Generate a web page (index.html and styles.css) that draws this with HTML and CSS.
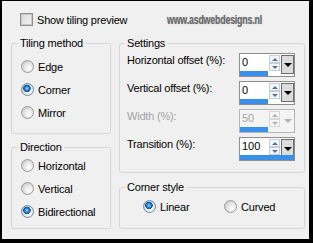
FILE: index.html
```html
<!DOCTYPE html>
<html lang="en">
<head>
    <meta charset="UTF-8">
    <title>Seamless Tiling</title>
    <link rel="stylesheet" href="styles.css">
</head>
<body>
    <div class="dialog">
        <div class="top-row">
            <label class="check"><span class="checkbox"></span>Show tiling preview</label>
            <div class="watermark"><span class="watermark-text">www.asdwebdesigns.nl</span></div>
        </div>

        <div class="groups">
            <div class="col col-left">
                <fieldset class="group group-tiling">
                    <legend>Tiling method</legend>
                    <div class="options">
                        <label class="radio-row"><span class="radio"></span>Edge</label>
                        <label class="radio-row"><span class="radio checked"></span>Corner</label>
                        <label class="radio-row"><span class="radio"></span>Mirror</label>
                    </div>
                </fieldset>
                <fieldset class="group group-direction">
                    <legend>Direction</legend>
                    <div class="options">
                        <label class="radio-row"><span class="radio"></span>Horizontal</label>
                        <label class="radio-row"><span class="radio"></span>Vertical</label>
                        <label class="radio-row"><span class="radio checked"></span>Bidirectional</label>
                    </div>
                </fieldset>
            </div>

            <div class="col col-right">
                <fieldset class="group group-settings">
                    <legend>Settings</legend>
                    <div class="field">
                        <span class="field-label">Horizontal offset (%):</span>
                        <div class="spin">
                            <div class="spin-value">0</div>
                            <div class="spin-arrows"><span class="up"></span><span class="down"></span></div>
                            <div class="spin-drop"></div>
                            <div class="spin-bar" style="width: 28px;"></div>
                        </div>
                    </div>
                    <div class="field">
                        <span class="field-label">Vertical offset (%):</span>
                        <div class="spin">
                            <div class="spin-value">0</div>
                            <div class="spin-arrows"><span class="up"></span><span class="down"></span></div>
                            <div class="spin-drop"></div>
                            <div class="spin-bar" style="width: 28px;"></div>
                        </div>
                    </div>
                    <div class="field disabled">
                        <span class="field-label">Width (%):</span>
                        <div class="spin">
                            <div class="spin-value">50</div>
                            <div class="spin-arrows"><span class="up"></span><span class="down"></span></div>
                            <div class="spin-drop"></div>
                            <div class="spin-bar" style="width: 28px;"></div>
                        </div>
                    </div>
                    <div class="field">
                        <span class="field-label">Transition (%):</span>
                        <div class="spin">
                            <div class="spin-value">100</div>
                            <div class="spin-arrows"><span class="up"></span><span class="down"></span></div>
                            <div class="spin-drop"></div>
                            <div class="spin-bar" style="width: 54px;"></div>
                        </div>
                    </div>
                </fieldset>
                <fieldset class="group group-corner">
                    <legend>Corner style</legend>
                    <div class="corner-options">
                        <label class="radio-row"><span class="radio checked"></span>Linear</label>
                        <label class="radio-row"><span class="radio"></span>Curved</label>
                    </div>
                </fieldset>
            </div>
        </div>
    </div>
</body>
</html>
```
FILE: styles.css
```css
* {
    margin: 0;
    padding: 0;
    box-sizing: border-box;
}

body {
    background: #000;
    font-family: "Liberation Sans", Arial, sans-serif;
    font-size: 11px;
    letter-spacing: -0.2px;
    color: #000;
    width: 313px;
    height: 243px;
    overflow: hidden;
}

.dialog {
    margin: 1px 4px 0 2px;
    width: 307px;
    height: 238px;
    background: #f0f0f0;
    padding: 12px 0 0 9px;
}

/* top row */
.top-row {
    display: flex;
    align-items: center;
    height: 13px;
    padding-left: 9px;
    white-space: nowrap;
}

.check {
    display: flex;
    align-items: center;
    gap: 4px;
}

.checkbox {
    width: 13px;
    height: 13px;
    border: 1px solid #8f8f8f;
    background: linear-gradient(135deg, #d8d8d8, #f4f4f4);
    box-shadow: inset 0 0 0 1px #c9c9c9;
}

.watermark {
    flex: none;
    width: 95px;
    min-width: 0;
    margin-left: 40px;
}

.watermark-text {
    display: inline-block;
    font-weight: bold;
    font-size: 12px;
    letter-spacing: -0.3px;
    color: #6a6a6a;
    text-shadow: 0 0 1px #aaa;
    transform: scaleX(0.74);
    transform-origin: left center;
}

/* group boxes */
.groups {
    display: flex;
    gap: 8px;
    margin-top: 11px;
}

.col {
    display: flex;
    flex-direction: column;
}

.col-left {
    width: 100px;
    gap: 7px;
}

.col-right {
    width: 186px;
    gap: 8px;
}

.group {
    border: 1px solid #d6d6d6;
    border-radius: 3px;
    min-width: 0;
    padding: 0 8px 0 9px;
}

.group legend {
    padding: 0 2px;
    margin-left: -3px;
    line-height: 13px;
}

.group-settings legend {
    margin-left: -2px;
}

.group-tiling {
    height: 97px;
}

.group-tiling .options {
    padding-top: 5px;
}

.group-direction {
    height: 88px;
}

.radio-row {
    display: flex;
    align-items: center;
    gap: 4px;
    height: 23px;
}

.radio {
    width: 13px;
    height: 13px;
    border-radius: 50%;
    border: 1px solid #9a9a9a;
    background: radial-gradient(circle at 65% 65%, #ffffff 0%, #e6e6e6 45%, #bdbdbd 100%);
    flex-shrink: 0;
}

.radio.checked {
    border-color: #6f8aa6;
    background:
        radial-gradient(circle at 45% 40%, #9fd3ff 0, #2b86d4 2px, #0d4f9a 3.5px, transparent 4px),
        radial-gradient(circle at 65% 65%, #ffffff 0%, #e6e6e6 45%, #bdbdbd 100%);
}

/* settings */
.group-settings {
    height: 136px;
    padding: 0 9px 0 7px;
}

.field {
    display: flex;
    justify-content: space-between;
    height: 24px;
    margin-top: 4px;
}

.field:first-of-type {
    margin-top: 3px;
}

.field-label {
    margin-top: 1px;
    line-height: 13px;
}

.spin {
    width: 56px;
    height: 24px;
    border: 1px solid #8e8e8e;
    background: #fff;
    display: grid;
    grid-template-columns: 29px 12px 13px;
    grid-template-rows: 17px 5px;
    letter-spacing: 0;
}

.spin-value {
    padding-left: 2px;
    line-height: 17px;
}

.spin-arrows {
    display: flex;
    flex-direction: column;
    padding: 1px 1px 0 0;
}

.spin-arrows span {
    flex: 1;
    border: 1px solid #c6cedc;
    background: #f4f6fa;
    position: relative;
}

.spin-arrows span::after {
    content: "";
    position: absolute;
    left: 2px;
    top: 2px;
    border-left: 3px solid transparent;
    border-right: 3px solid transparent;
}

.spin-arrows .up::after {
    border-bottom: 3px solid #5b6f9f;
}

.spin-arrows .down::after {
    border-top: 3px solid #5b6f9f;
}

.spin-drop {
    margin: 1px 0 -3px;
    border: 1px solid #6c6c6c;
    background: #dcdcdc;
    display: flex;
    align-items: center;
    justify-content: center;
}

.spin-drop::after {
    content: "";
    border-left: 4px solid transparent;
    border-right: 4px solid transparent;
    border-top: 4px solid #000;
}

.spin-bar {
    grid-column: 1 / -1;
    grid-row: 2;
    background: #3a90e8;
}

.disabled .field-label,
.disabled .spin-value {
    color: #a3a3a3;
}

.disabled .spin {
    background: #f4f4f4;
    border-color: #b5b5b5;
}

.disabled .spin-arrows .up::after {
    border-bottom-color: #b0b0b0;
}

.disabled .spin-arrows .down::after {
    border-top-color: #b0b0b0;
}

.disabled .spin-arrows span {
    border-color: #d8d8d8;
}

.disabled .spin-drop {
    border-color: transparent;
    background: transparent;
}

.disabled .spin-drop::after {
    border-top-color: #b0b0b0;
}

/* corner style */
.group-corner {
    height: 48px;
    padding-left: 23px;
}

.group-corner legend {
    margin-left: -18px;
}

.corner-options {
    display: grid;
    grid-template-columns: 81px auto;
    padding-top: 1px;
}
```
